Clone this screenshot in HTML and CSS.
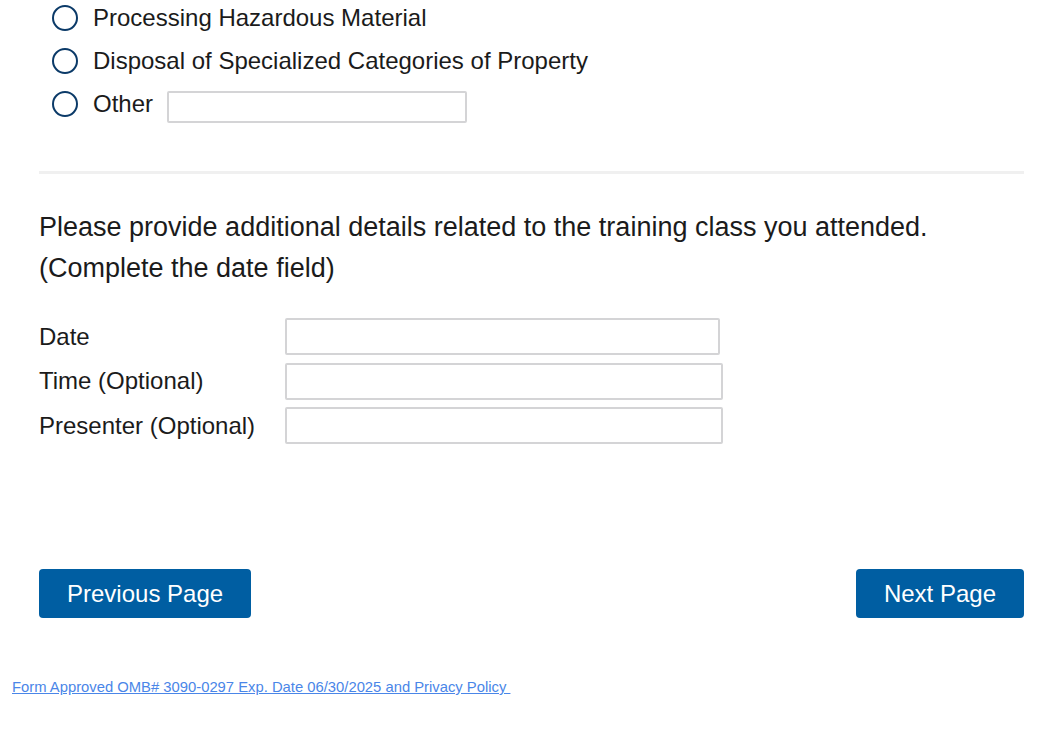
FILE: index.html
```html
<!DOCTYPE html>
<html lang="en">
<head>
<meta charset="utf-8">
<link rel="stylesheet" href="styles.css">
</head>
<body>
<main class="form">
  <ul class="options">
    <li class="option"><span class="radio"></span><span class="opt-label">Processing Hazardous Material</span></li>
    <li class="option"><span class="radio"></span><span class="opt-label">Disposal of Specialized Categories of Property</span></li>
    <li class="option"><span class="radio"></span><span class="opt-label">Other</span><input class="other-input" type="text"></li>
  </ul>
  <hr class="divider">
  <p class="question">Please provide additional details related to the training class you attended.<br>(Complete the date field)</p>
  <div class="fields">
    <label class="field-label">Date</label><input class="field-input narrow" type="text">
    <label class="field-label">Time (Optional)</label><input class="field-input" type="text">
    <label class="field-label">Presenter (Optional)</label><input class="field-input" type="text">
  </div>
  <div class="nav">
    <button class="btn">Previous Page</button>
    <button class="btn">Next Page</button>
  </div>
</main>
<footer class="footer">
  <a class="footer-link" href="#">Form Approved OMB# 3090-0297 Exp. Date 06/30/2025 and Privacy Policy&nbsp;</a>
</footer>
</body>
</html>
```
FILE: styles.css
```css
html, body {
  margin: 0;
  padding: 0;
  background: #fff;
}
body {
  font-family: "Liberation Sans", Arial, sans-serif;
  color: #1b1b1b;
  width: 1051px;
}
.form {
  padding: 0 27px 0 39px;
}
.options {
  list-style: none;
  margin: 0;
  padding: 0 0 0 13px;
  display: flex;
  flex-direction: column;
  gap: 17px;
  padding-top: 5px;
}
.option {
  display: flex;
  align-items: center;
  height: 26px;
  font-size: 24px;
}
.radio {
  width: 22px;
  height: 22px;
  border: 2.5px solid #0b3a68;
  border-radius: 50%;
  flex: none;
  margin-right: 15px;
}
.opt-label {
  line-height: 26px;
}
.other-input {
  margin: 5px 0 0 14px;
  width: 300px;
  height: 32px;
  box-sizing: border-box;
  border: 2px solid #d4d4d6;
  border-radius: 2px;
  font: inherit;
}
.divider {
  margin: 54px 0 0;
  border: none;
  height: 3px;
  background: #f0f0f0;
}
.question {
  margin: 33px 0 0;
  font-size: 27px;
  line-height: 41px;
}
.fields {
  margin-top: 29px;
  display: grid;
  grid-template-columns: 246px 438px;
  row-gap: 7.5px;
  align-items: center;
}
.field-label {
  font-size: 24px;
}
.field-input {
  height: 37px;
  box-sizing: border-box;
  width: 438px;
  border: 2px solid #d4d4d6;
  border-radius: 2px;
  font: inherit;
}
.field-input.narrow {
  width: 435px;
}
.nav {
  margin-top: 125px;
  display: flex;
  justify-content: space-between;
}
.btn {
  background: #005ea2;
  color: #fff;
  border: none;
  border-radius: 4px;
  font-family: "Liberation Sans", Arial, sans-serif;
  font-size: 24px;
  height: 49px;
  padding: 0 28px;
  cursor: pointer;
}
.footer {
  padding: 60px 0 0 12px;
}
.footer-link {
  font-size: 14.8px;
  color: #4a86e8;
  text-decoration: underline;
}
```
